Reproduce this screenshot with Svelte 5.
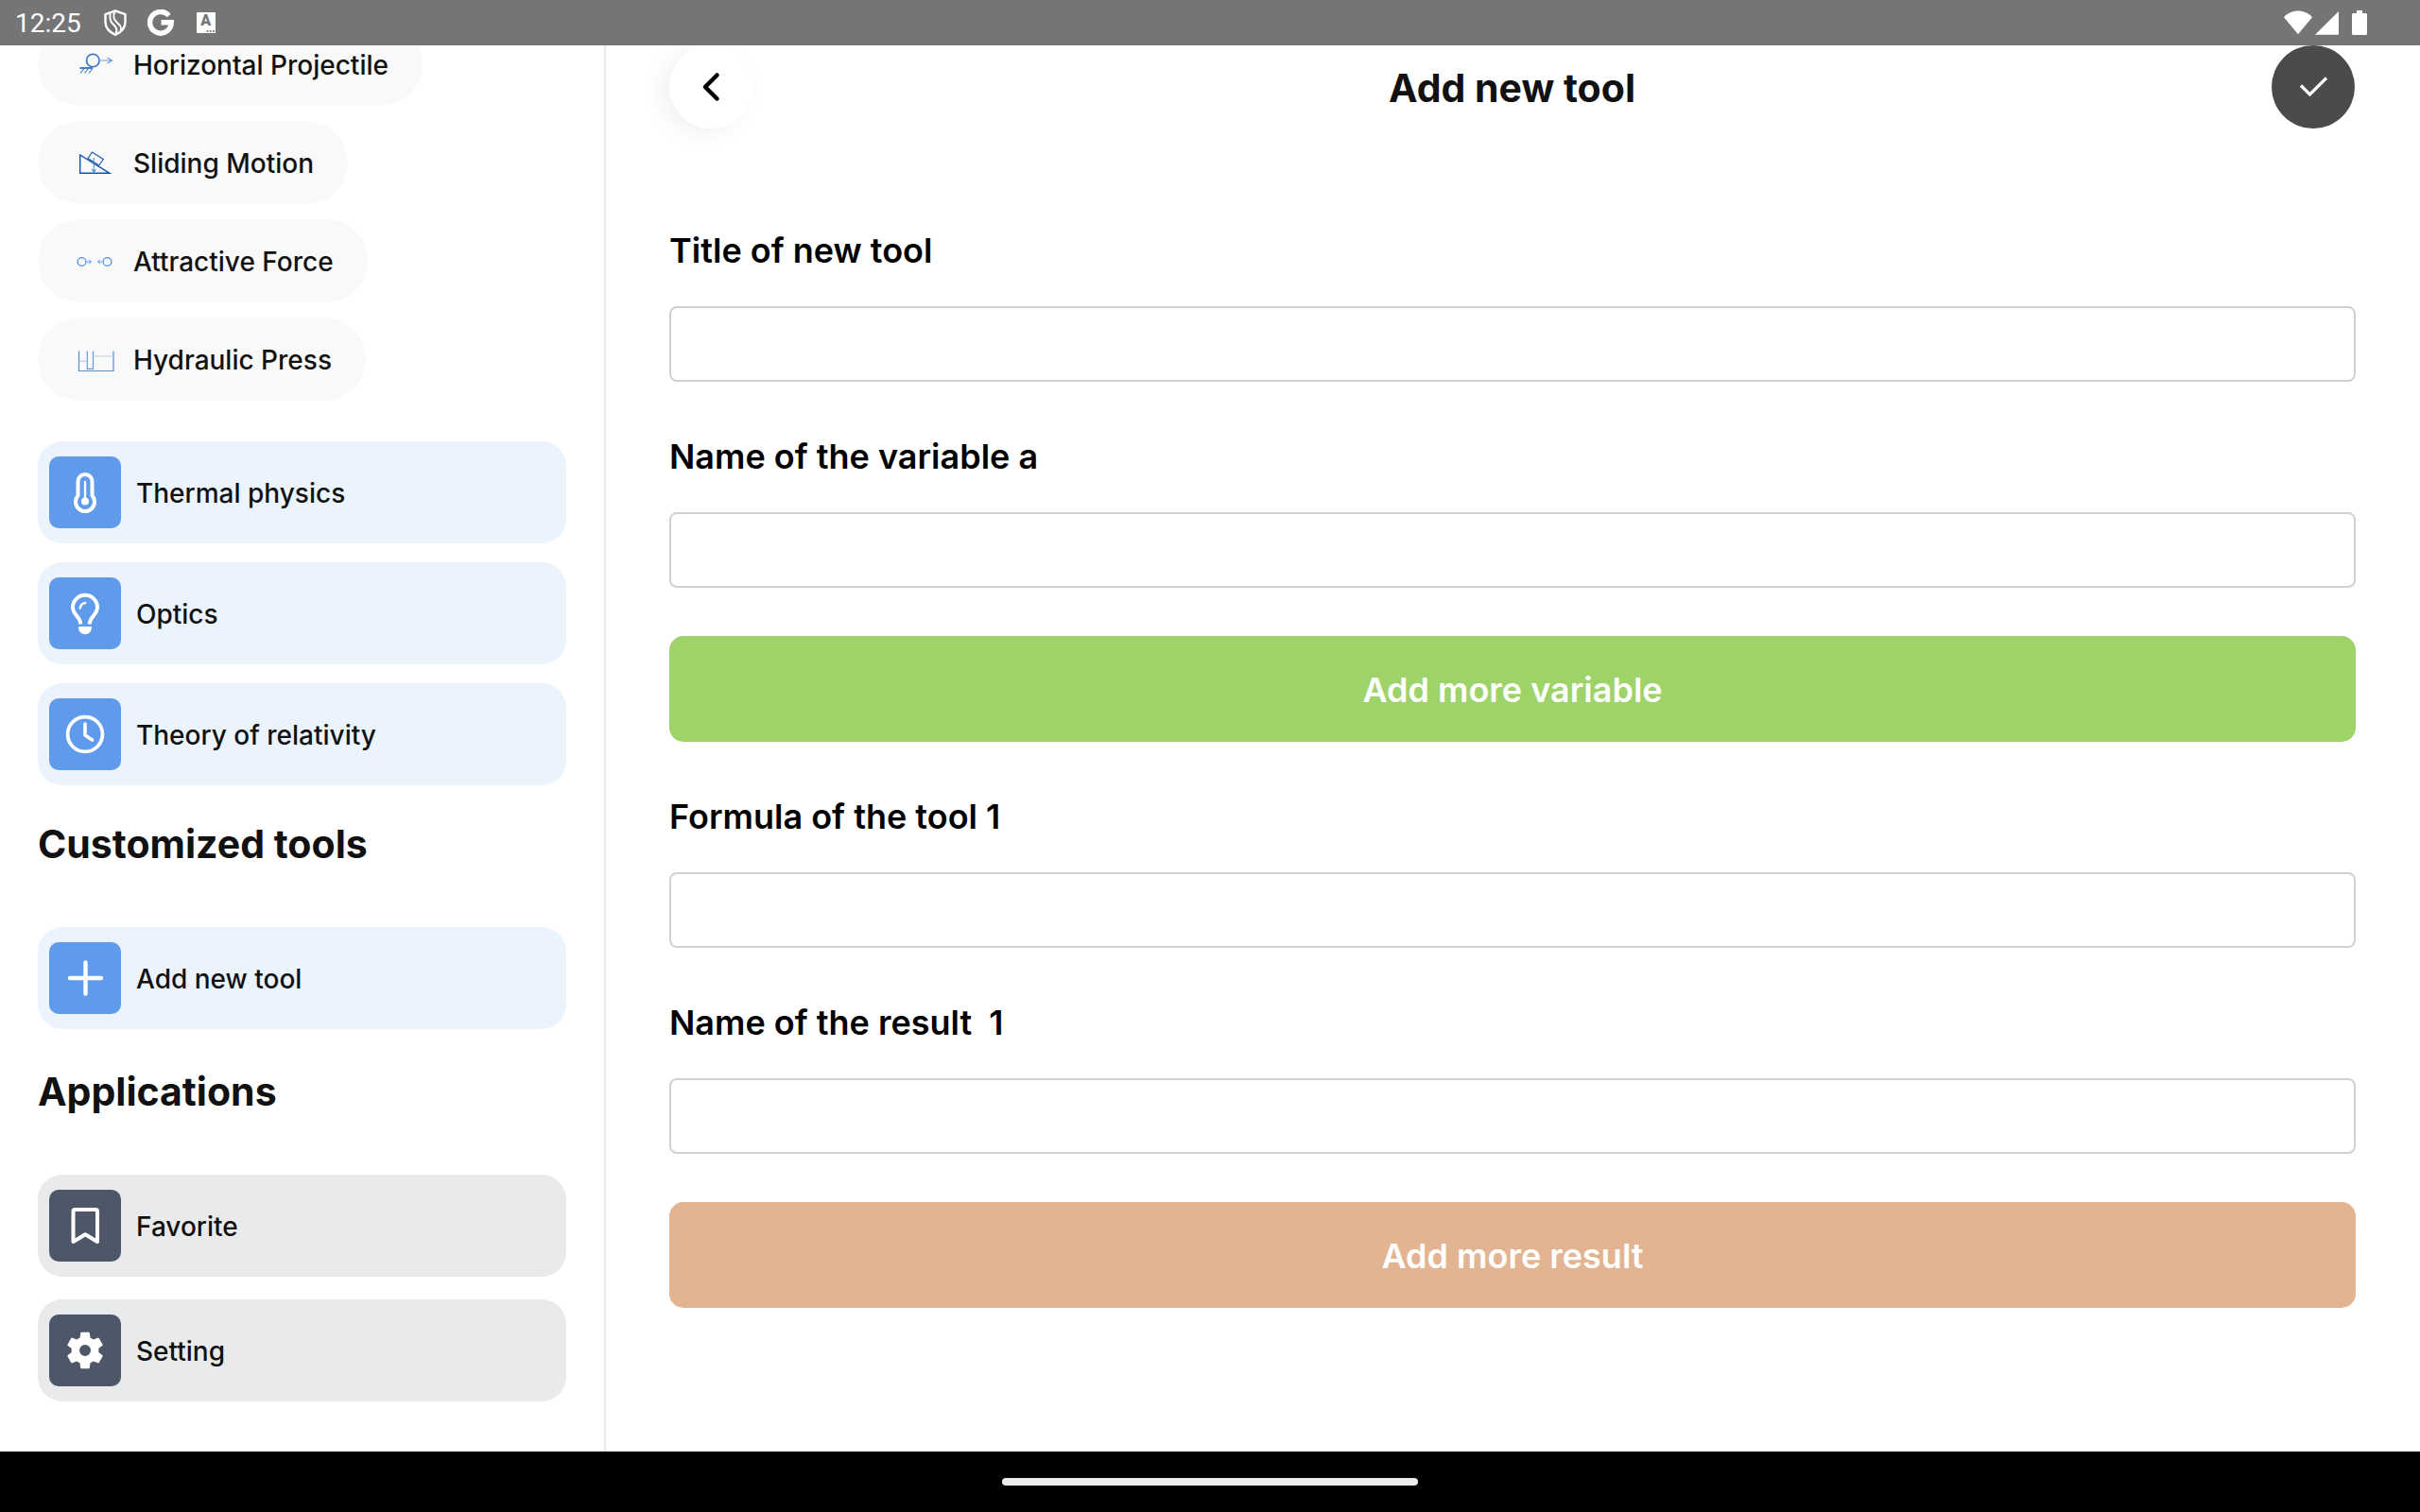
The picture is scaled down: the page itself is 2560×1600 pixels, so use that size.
<script lang="ts">
	type Field = { id: string; label: string; value: string };

	const examples = [
		{ icon: 'projectile', label: 'Horizontal Projectile' },
		{ icon: 'sliding', label: 'Sliding Motion' },
		{ icon: 'attractive', label: 'Attractive Force' },
		{ icon: 'hydraulic', label: 'Hydraulic Press' }
	];

	const topics = [
		{ icon: 'thermo', label: 'Thermal physics' },
		{ icon: 'bulb', label: 'Optics' },
		{ icon: 'clock', label: 'Theory of relativity' }
	];

	const apps = [
		{ icon: 'bookmark', label: 'Favorite' },
		{ icon: 'gear', label: 'Setting' }
	];

	let variables: Field[] = $state([
		{ id: 'title', label: 'Title of new tool', value: '' },
		{ id: 'var-a', label: 'Name of the variable a', value: '' }
	]);

	let results: Field[] = $state([
		{ id: 'formula-1', label: 'Formula of the tool 1', value: '' },
		{ id: 'result-1', label: 'Name of the result\u00a0 1', value: '' }
	]);

	function addVariable() {
		const letter = String.fromCharCode(96 + variables.length);
		variables.push({ id: `var-${letter}`, label: `Name of the variable ${letter}`, value: '' });
	}

	function addResult() {
		const n = results.length / 2 + 1;
		results.push({ id: `formula-${n}`, label: `Formula of the tool ${n}`, value: '' });
		results.push({ id: `result-${n}`, label: `Name of the result\u00a0 ${n}`, value: '' });
	}
</script>

{#snippet lineIcon(name: string)}
	<svg class="line-icon" viewBox="0 0 40 40" fill="none" aria-hidden="true">
		{#if name === 'projectile'}
			<circle cx="18.3" cy="16" r="6.8" stroke="#2f74cc" stroke-width="1.6" />
			<path d="M4.5 24H18" stroke="#2f74cc" stroke-width="1.8" />
			<path d="M9 24.5l-4 5M13.5 24.5l-4 5M18 24.5l-4 5" stroke="#4a80c4" stroke-width="1.2" />
			<path d="M25.5 16H38M33.5 13l5 3-5 3" stroke="#6f9ad4" stroke-width="1.2" />
		{:else if name === 'sliding'}
			<path d="M4.7 12V31.3H36Z" stroke="#1455a8" stroke-width="1.4" />
			<path d="M17.5 9L29.3 16.5 24.7 23 13 15.5Z" stroke="#1d5fb4" stroke-width="1.2" />
			<path d="M19.3 15V30M17 27l2.3 3.3 2.3-3.3" stroke="#5d8fd0" stroke-width="1.1" />
		{:else if name === 'attractive'}
			<circle cx="6.5" cy="21" r="4.4" stroke="#4b93ee" stroke-width="1.3" />
			<circle cx="33.5" cy="21" r="4.4" stroke="#4b93ee" stroke-width="1.3" />
			<path d="M11 21h5.5M14 19l2.5 2-2.5 2M29 21h-5.5M26 19l-2.5 2 2.5 2" stroke="#86b0e6" stroke-width="1.1" />
		{:else}
			<path d="M3.5 11.5V32.5H40V11.5" stroke="#5a8cd0" stroke-width="1.2" />
			<path d="M12.3 11.5V30.3H18.5V11.5" stroke="#6b98d6" stroke-width="1.2" />
			<path d="M3.5 22.2h8.8M18.5 17H40" stroke="#b4cdec" stroke-width="1.2" />
		{/if}
	</svg>
{/snippet}

{#snippet tileIcon(name: string)}
	<span class="tile">
		<svg
			viewBox="0 0 48 48"
			fill="none"
			stroke="#fff"
			stroke-width="4"
			stroke-linecap="round"
			stroke-linejoin="round"
			aria-hidden="true"
		>
			{#if name === 'thermo'}
				<path d="M16.5 12.5a7.5 7.5 0 0 1 15 0V27.4A10 10 0 1 1 16.5 27.4Z" />
				<path d="M24 13V33" stroke-width="2.4" />
				<circle cx="24" cy="33.5" r="4" fill="#fff" stroke="none" />
			{:else if name === 'bulb'}
				<path d="M19 33.5C18 27.5 11 25 11 17.8a13 13 0 0 1 26 0C37 25 30 27.5 29 33.5" stroke-linecap="square" />
				<path d="M18.8 18.5a6 6 0 0 1 5.4-5.5" stroke-width="2.6" />
				<path d="M17 38h14v1.2a7 7 0 0 1-14 0Z" fill="#fff" stroke="none" />
			{:else if name === 'clock'}
				<circle cx="24" cy="24" r="18.4" stroke-width="3.8" />
				<path d="M24 13V25l7.5 5" stroke-width="3.6" />
			{:else if name === 'plus'}
				<path d="M24.5 7.5v33M8 24h33" stroke-width="4.4" />
			{:else if name === 'bookmark'}
				<path d="M11.5 41V9a2 2 0 0 1 2-2h21.5a2 2 0 0 1 2 2V41L24.2 33.2Z" />
			{:else}
				<path
					fill="#fff"
					stroke="none"
					fill-rule="evenodd"
					transform="scale(2)"
					d="M19.14 12.94c.04-.3.06-.61.06-.94 0-.32-.02-.64-.07-.94l2.03-1.58a.49.49 0 0 0 .12-.61l-1.92-3.32a.49.49 0 0 0-.59-.22l-2.39.96c-.5-.38-1.03-.7-1.62-.94l-.36-2.54a.48.48 0 0 0-.48-.41h-3.84a.47.47 0 0 0-.47.41l-.36 2.54c-.59.24-1.13.57-1.62.94l-2.39-.96a.48.48 0 0 0-.59.22L2.74 8.87a.48.48 0 0 0 .12.61l2.03 1.58c-.05.3-.09.63-.09.94s.02.64.07.94l-2.03 1.58a.49.49 0 0 0-.12.61l1.92 3.32c.12.22.37.29.59.22l2.39-.96c.5.38 1.03.7 1.62.94l.36 2.54c.05.24.24.41.48.41h3.84c.24 0 .44-.17.47-.41l.36-2.54c.59-.24 1.13-.56 1.62-.94l2.39.96c.22.08.47 0 .59-.22l1.92-3.32a.47.47 0 0 0-.12-.61l-2.01-1.58zM12 15a3 3 0 1 1 0-6 3 3 0 0 1 0 6z"
				/>
			{/if}
		</svg>
	</span>
{/snippet}

{#snippet field(item: Field)}
	<div class="field">
		<label for={item.id}>{item.label}</label>
		<input id={item.id} type="text" bind:value={item.value} />
	</div>
{/snippet}

<div class="screen">
	<div class="status-bar">
		<div class="status-left">
			<span class="time">12:25</span>
			<div class="notices">
				<svg class="glyph" viewBox="0 0 28 28" fill="none" stroke="#fff" stroke-width="2.4" stroke-linejoin="round" aria-hidden="true">
					<path d="M14 1.5L24.5 5.2V13c0 6-4 11-10.5 13.8C7.5 24 3.5 19 3.5 13V5.2Z" />
					<path d="M13.5 2.500c-2.500 5-1.500 8 2.500 11.500 4 3.500 5 5.500 3.500 8.500M8.500 4.500c-1 8 2 10 5 13 2 2 2.500 4.500 1 8" stroke-width="2" />
				</svg>
				<svg class="glyph" viewBox="0 0 28 28" fill="none" stroke="#fff" stroke-width="5.4" aria-hidden="true">
					<path d="M22.6 6.6A11.3 11.3 0 1 0 25.2 13.8H14.5" />
				</svg>
				<span class="lang-badge" aria-hidden="true">
					<span class="lang-letter">A</span>
					<svg viewBox="0 0 20 4" fill="#757575">
						<circle cx="11.5" cy="2" r="1.1" />
						<circle cx="14.7" cy="2" r="1.1" />
						<circle cx="17.9" cy="2" r="1.1" />
					</svg>
				</span>
			</div>
		</div>
		<svg class="signals" viewBox="0 0 88 28" fill="#fff" aria-hidden="true">
			<path d="M0 8.2C8-.7 22-.7 30 8.2L15 26.3Z" />
			<path d="M58 2V26.7H33Z" />
			<path d="M77 1h6v3h3.5a1.5 1.5 0 0 1 1.5 1.5V25.5a1.5 1.5 0 0 1-1.5 1.5h-13a1.5 1.5 0 0 1-1.5-1.5V5.5A1.5 1.5 0 0 1 73.5 4H77Z" />
		</svg>
	</div>

	<div class="content">
		<nav class="sidebar">
			<div class="pills">
				{#each examples as item}
					<button class="pill" type="button">
						{@render lineIcon(item.icon)}
						<span class="name">{item.label}</span>
					</button>
				{/each}
			</div>

			<div class="cards">
				{#each topics as item}
					<button class="card" type="button">
						{@render tileIcon(item.icon)}
						<span class="name">{item.label}</span>
					</button>
				{/each}
			</div>

			<h2>Customized tools</h2>
			<div class="cards custom">
				<button class="card" type="button">
					{@render tileIcon('plus')}
					<span class="name">Add new tool</span>
				</button>
			</div>

			<h2>Applications</h2>
			<div class="cards apps">
				{#each apps as item}
					<button class="card dark" type="button">
						{@render tileIcon(item.icon)}
						<span class="name">{item.label}</span>
					</button>
				{/each}
			</div>
		</nav>

		<main>
			<header>
				<button class="round back" type="button" aria-label="Back">
					<svg viewBox="0 0 88 88" fill="none" stroke="#000" stroke-width="4.5" stroke-linecap="round" stroke-linejoin="round">
						<path d="M50.5 31.5L38 44 50.5 56.5" />
					</svg>
				</button>
				<h1>Add new tool</h1>
				<button class="round save" type="button" aria-label="Save">
					<svg viewBox="0 0 88 88" fill="none" stroke="#fff" stroke-width="3.2">
						<path d="M31 42.5L40.5 52 58 34.5" />
					</svg>
				</button>
			</header>

			<form onsubmit={(e) => e.preventDefault()}>
				{#each variables as item (item.id)}
					{@render field(item)}
				{/each}
				<button class="wide green" type="button" onclick={addVariable}>Add more variable</button>
				{#each results as item (item.id)}
					{@render field(item)}
				{/each}
				<button class="wide orange" type="button" onclick={addResult}>Add more result</button>
			</form>
		</main>
	</div>

	<div class="gesture-bar">
		<span class="handle"></span>
	</div>
</div>

<style>
	:global(body) {
		margin: 0;
		background: #fff;
	}

	.screen {
		display: flex;
		flex-direction: column;
		height: 100vh;
		font-family: Inter, 'Noto Sans', sans-serif;
		color: #111;
	}

	button {
		border: none;
		font: inherit;
		color: inherit;
		cursor: pointer;
	}

	h1,
	h2 {
		margin: 0;
		font-size: 41px;
		line-height: 50px;
		font-weight: 700;
	}

	/* status bar */
	.status-bar {
		flex: none;
		display: flex;
		align-items: center;
		justify-content: space-between;
		height: 48px;
		padding: 0 56px 0 16px;
		background: #757575;
		color: #fff;
	}

	.status-left {
		display: flex;
		align-items: center;
		gap: 22px;
	}

	.notices {
		display: flex;
		align-items: center;
		gap: 20px;
	}

	.time {
		padding-top: 2px;
		font-family: Roboto, sans-serif;
		font-size: 28px;
		line-height: 46px;
	}

	.glyph {
		width: 28px;
		height: 28px;
	}

	.lang-badge {
		display: flex;
		flex-direction: column;
		align-items: center;
		width: 20px;
		height: 22px;
		margin-left: 4px;
		border-radius: 1px;
		background: #fff;
		color: #757575;
	}

	.lang-letter {
		font-family: Roboto, sans-serif;
		font-size: 16px;
		line-height: 18px;
		font-weight: 900;
	}

	.lang-badge svg {
		width: 20px;
		height: 4px;
	}

	.signals {
		width: 88px;
		height: 28px;
	}

	.content {
		flex: 1;
		display: flex;
		min-height: 0;
	}

	/* sidebar, kept at the end of its list */
	.sidebar {
		flex: none;
		display: flex;
		flex-direction: column;
		justify-content: flex-end;
		box-sizing: border-box;
		width: calc(25% + 1px);
		padding: 0 40px 53px;
		border-right: 2px solid #e8e8e8;
		overflow: hidden;
	}

	.pills {
		display: flex;
		flex-direction: column;
		align-items: flex-start;
		gap: 16px;
		margin-bottom: 43px;
	}

	.pill {
		display: flex;
		align-items: center;
		gap: 21px;
		height: 88px;
		padding: 0 36px 0 40px;
		border-radius: 44px;
		background: #f9f9f9;
		white-space: nowrap;
	}

	.name {
		padding-top: 2px;
		font-size: 28px;
		line-height: 34px;
		font-weight: 500;
	}

	.line-icon {
		flex: none;
		width: 40px;
		height: 40px;
		overflow: visible;
	}

	.cards {
		display: flex;
		flex-direction: column;
		gap: 20px;
	}

	.custom {
		padding-bottom: 4px;
	}

	.apps {
		gap: 24px;
	}

	.card {
		display: flex;
		align-items: center;
		gap: 16px;
		height: 108px;
		padding: 0 12px;
		border-radius: 26px;
		background: #ebf3fd;
	}

	.tile {
		flex: none;
		display: flex;
		align-items: center;
		justify-content: center;
		width: 76px;
		height: 76px;
		border-radius: 10px;
		background: #5f9bea;
	}

	.tile svg {
		width: 48px;
		height: 48px;
	}

	.dark {
		background: #e9eaec;
	}

	.dark .tile {
		background: #4d5768;
	}

	h2 {
		padding: 37px 0 63px;
	}

	/* form side */
	main {
		flex: 1;
		min-width: 0;
		padding: 0 68px 0 67px;
	}

	header {
		display: flex;
		align-items: center;
		justify-content: space-between;
		padding-right: 1px;
	}

	h1 {
		padding-top: 2px;
	}

	.round {
		width: 88px;
		height: 88px;
		padding: 0;
		border-radius: 50%;
	}

	.round svg {
		display: block;
		width: 88px;
		height: 88px;
	}

	.back {
		background: #fff;
		box-shadow: -8px 4px 24px rgba(0, 0, 0, 0.06);
	}

	.save {
		background: #4a4c4b;
	}

	form {
		display: flex;
		flex-direction: column;
		padding-top: 50px;
	}

	.field {
		display: flex;
		flex-direction: column;
		padding-top: 57px;
		gap: 37px;
	}

	label {
		align-self: flex-start;
		font-size: 36px;
		line-height: 44px;
		font-weight: 600;
		color: #000;
	}

	input {
		box-sizing: border-box;
		width: 100%;
		height: 80px;
		padding: 0 20px;
		border: 2px solid #d1d1d1;
		border-radius: 8px;
		background: #fff;
		font: inherit;
		font-size: 28px;
	}

	.wide {
		height: 112px;
		margin-top: 51px;
		padding: 2px 0 0;
		border-radius: 15px;
		color: #fff;
		font-size: 36px;
		line-height: 44px;
		font-weight: 600;
	}

	.green {
		background: #9ed36a;
	}

	.orange {
		background: #e2b491;
	}

	/* gesture bar */
	.gesture-bar {
		flex: none;
		display: flex;
		align-items: center;
		justify-content: center;
		height: 64px;
		background: #000;
	}

	.handle {
		width: 440px;
		height: 8px;
		border-radius: 4px;
		background: #ebebeb;
	}
</style>
